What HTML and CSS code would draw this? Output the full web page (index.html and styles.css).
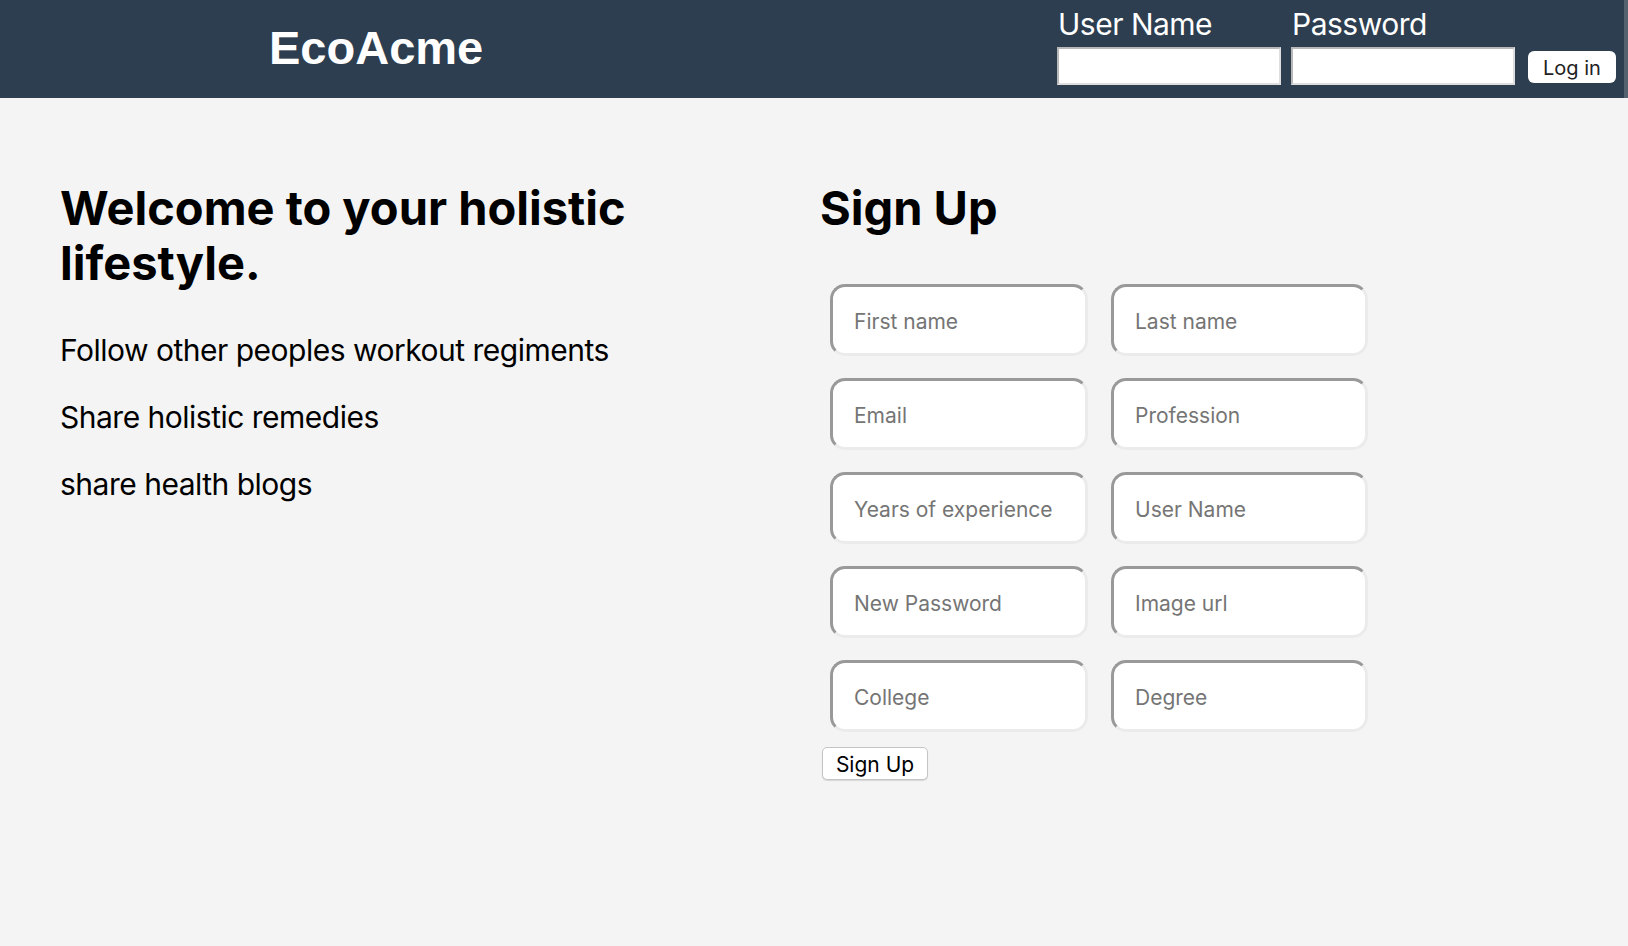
FILE: index.html
```html
<!DOCTYPE html>
<html lang="en">
<head>
<meta charset="utf-8">
<title>EcoAcme</title>
<link rel="stylesheet" href="styles.css">
</head>
<body>
<header class="topbar">
  <div class="brand">EcoAcme</div>
  <form class="login">
    <label class="login-field">
      <span class="login-label">User Name</span>
      <input class="login-input" type="text">
    </label>
    <label class="login-field">
      <span class="login-label">Password</span>
      <input class="login-input" type="password">
    </label>
    <button class="login-btn" type="button">Log in</button>
  </form>
</header>
<main class="content">
  <section class="intro">
    <h1 class="title">Welcome to your holistic lifestyle.</h1>
    <p class="feature">Follow other peoples workout regiments</p>
    <p class="feature">Share holistic remedies</p>
    <p class="feature">share health blogs</p>
  </section>
  <section class="signup">
    <h1 class="title">Sign Up</h1>
    <form class="signup-form">
      <div class="signup-grid">
        <input class="field" type="text" placeholder="First name">
        <input class="field" type="text" placeholder="Last name">
        <input class="field" type="text" placeholder="Email">
        <input class="field" type="text" placeholder="Profession">
        <input class="field" type="text" placeholder="Years of experience">
        <input class="field" type="text" placeholder="User Name">
        <input class="field" type="password" placeholder="New Password">
        <input class="field" type="text" placeholder="Image url">
        <input class="field" type="text" placeholder="College">
        <input class="field" type="text" placeholder="Degree">
      </div>
      <button class="signup-btn" type="button">Sign Up</button>
    </form>
  </section>
</main>
</body>
</html>
```
FILE: styles.css
```css
* { box-sizing: border-box; }

html, body {
  margin: 0;
  padding: 0;
}

body {
  background: #f4f4f4;
  font-family: Inter, "Noto Sans", sans-serif;
  color: #000;
  min-height: 946px;
}

.topbar {
  height: 98px;
  background: #2c3e50;
  display: flex;
  justify-content: space-between;
  align-items: center;
  padding: 0 12px 0 269px;
  border-right: 4px solid #54626f;
}

.brand {
  font-family: "Liberation Sans", Arial, sans-serif;
  font-weight: bold;
  font-size: 47px;
  line-height: 47px;
  color: #fff;
  margin-top: -3px;
}

.login {
  display: flex;
  align-items: flex-end;
  align-self: flex-start;
  padding-top: 5px;
  margin-right: -4px;
}

.login-field {
  display: flex;
  flex-direction: column;
  margin-right: 10px;
}

.login-field + .login-field {
  margin-right: 13px;
}

.login-label {
  color: #fff;
  font-size: 30px;
  letter-spacing: -0.5px;
  line-height: 38px;
  margin-bottom: 4px;
  padding-left: 1px;
}

.login-input {
  width: 224px;
  height: 38px;
  margin: 0;
  border: 2px solid;
  border-color: #b8b8b8 #dedede #dedede #b8b8b8;
  background: #fff;
}

.login-btn {
  width: 88px;
  height: 32px;
  margin: 0 0 2px 0;
  border: none;
  border-radius: 6px;
  background: #fff;
  color: #222;
  font-family: Inter, "Noto Sans", sans-serif;
  font-size: 20px;
  padding: 2px 0 0 0;
}

.content {
  display: flex;
  padding: 82px 0 0 60px;
}

.intro {
  width: 760px;
}

.intro .title {
  width: 660px;
}

.title {
  margin: 0;
  font-size: 47px;
  line-height: 55px;
  font-weight: 700;
}

.feature {
  margin: 27px 0 0 0;
  font-size: 30px;
  letter-spacing: -0.5px;
  line-height: 40px;
}

.intro .title + .feature {
  margin-top: 40px;
}

.signup-form {
  margin-top: 49px;
}

.signup-grid {
  display: grid;
  grid-template-columns: 258px 257px;
  column-gap: 23px;
  row-gap: 22px;
  margin-left: 10px;
}

.field {
  height: 72px;
  margin: 0;
  border: 3px solid;
  border-color: #999 #ebebeb #ebebeb #999;
  border-radius: 15px;
  background: #fff;
  padding: 3px 20px 0 21px;
  font-family: Inter, "Noto Sans", sans-serif;
  font-size: 21px;
  color: #000;
}

.field::placeholder {
  color: #757575;
}

.signup-btn {
  display: block;
  margin: 15px 0 0 2px;
  width: 106px;
  height: 33px;
  padding: 1px 0 0 0;
  background: #fff;
  border: 1px solid #c4c4c4;
  border-radius: 5px;
  box-shadow: 0 1px 1px rgba(0,0,0,0.12);
  font-family: Inter, "Noto Sans", sans-serif;
  font-size: 21px;
  color: #000;
}
```
